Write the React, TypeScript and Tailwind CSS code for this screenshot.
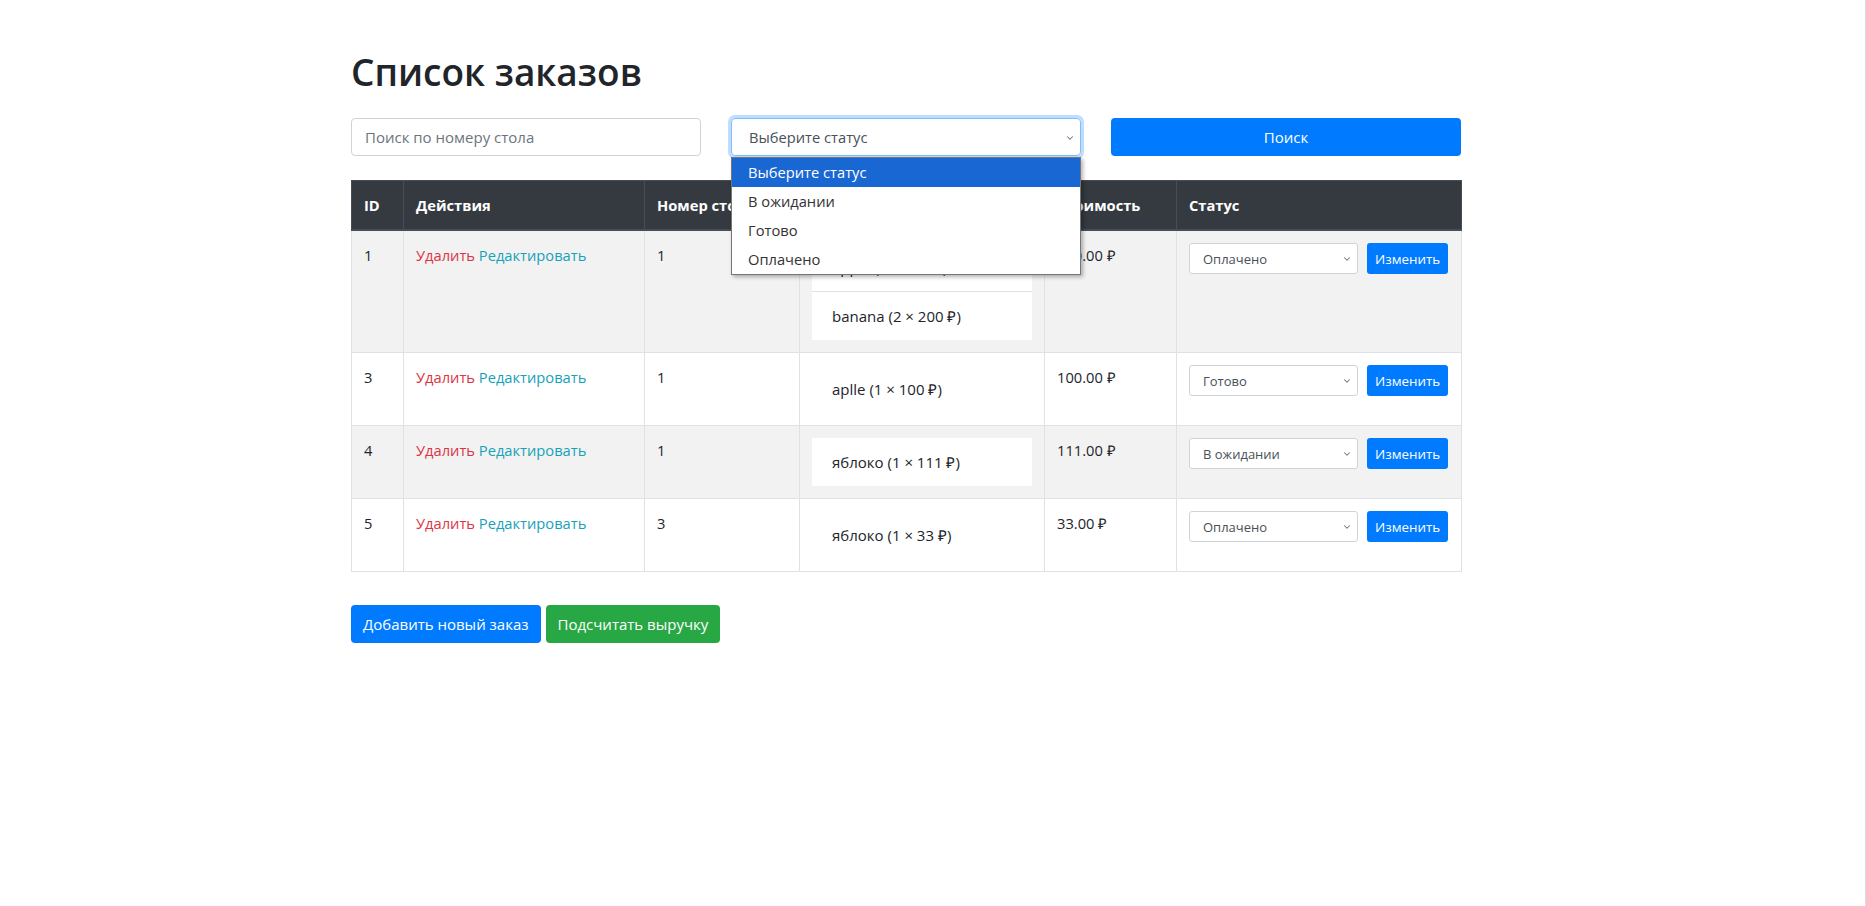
import { ChevronDown } from 'lucide-react'

type Order = {
  id: number
  table: number
  items: string[]
  total: string
  status: string
}

const orders: Order[] = [
  { id: 1, table: 1, items: ['apple (1 × 100 ₽)', 'banana (2 × 200 ₽)'], total: '500.00 ₽', status: 'Оплачено' },
  { id: 3, table: 1, items: ['aplle (1 × 100 ₽)'], total: '100.00 ₽', status: 'Готово' },
  { id: 4, table: 1, items: ['яблоко (1 × 111 ₽)'], total: '111.00 ₽', status: 'В ожидании' },
  { id: 5, table: 3, items: ['яблоко (1 × 33 ₽)'], total: '33.00 ₽', status: 'Оплачено' },
]

const statuses = ['Выберите статус', 'В ожидании', 'Готово', 'Оплачено']

const StatusSelect = ({ value }: { value: string }) => (
  <div className="relative w-[169px]">
    <select
      defaultValue={value}
      className="h-[31px] w-full appearance-none rounded-[3px] border border-[#ced4da] bg-white pl-[13px] text-[13px] text-[#495057]"
    >
      {statuses.slice(1).map((s) => (
        <option key={s}>{s}</option>
      ))}
    </select>
    <ChevronDown className="pointer-events-none absolute right-[6px] top-[11px] h-[10px] w-[10px] text-[#6c757d]" strokeWidth={2.5} />
  </div>
)

export default function App() {
  return (
    <div className="min-h-screen w-full border-r border-[#d3dae3] bg-white text-[14.7px] leading-6 text-[#212529] [font-family:'Open_Sans',sans-serif]">
      <div className="ml-[351px] w-[1110px] pt-[51px]">
        <h1 className="mb-[25px] text-[37px] font-semibold leading-[42px]">Список заказов</h1>

        <div className="grid grid-cols-3 gap-[30px]">
          <input
            type="text"
            placeholder="Поиск по номеру стола"
            className="h-[38px] rounded-[4px] border border-[#ced4da] px-[13px] text-[15px] placeholder:text-[#6c757d]"
          />
          <div className="relative">
            <div className="flex h-[38px] items-center rounded-[4px] border border-[#80bdff] pl-[17px] text-[#495057] shadow-[0_0_0_3px_rgba(0,123,255,0.25)]">
              Выберите статус
            </div>
            <ChevronDown className="pointer-events-none absolute right-[6px] top-[15px] h-[10px] w-[10px] text-[#6c757d]" strokeWidth={2.5} />
            <ul className="absolute left-0 top-[39px] z-10 w-full border border-[#767676] bg-white shadow-[2px_2px_4px_rgba(0,0,0,0.3)]">
              {statuses.map((s, i) => (
                <li
                  key={s}
                  className={
                    i === 0
                      ? 'h-[29px] bg-[#1967d2] pl-4 leading-[29px] text-white'
                      : 'h-[29px] pl-4 leading-[29px] text-[#333]'
                  }
                >
                  {s}
                </li>
              ))}
            </ul>
          </div>
          <button className="h-[38px] rounded-[4px] bg-[#007bff] text-[15px] text-white">Поиск</button>
        </div>

        <table className="mt-[24px] w-full table-fixed border-collapse">
          <thead>
            <tr className="bg-[#343a40] text-white">
              <th className="w-[52px] border border-b-2 border-[#454d55] p-3 text-left font-bold">ID</th>
              <th className="w-[241px] border border-b-2 border-[#454d55] p-3 text-left font-bold">Действия</th>
              <th className="w-[155px] border border-b-2 border-[#454d55] p-3 text-left font-bold">Номер стола</th>
              <th className="w-[245px] border border-b-2 border-[#454d55] p-3 text-left font-bold">Товары</th>
              <th className="w-[132px] border border-b-2 border-[#454d55] p-3 text-left font-bold">Стоимость</th>
              <th className="w-[285px] border border-b-2 border-[#454d55] p-3 text-left font-bold">Статус</th>
            </tr>
          </thead>
          <tbody>
            {orders.map((o, i) => (
              <tr key={o.id} className={i % 2 === 0 ? 'bg-[#f2f2f2]' : 'bg-white'}>
                <td className="border border-[#dee2e6] p-3 align-top">{o.id}</td>
                <td className="border border-[#dee2e6] p-3 align-top">
                  <a className="text-[#dc3545]">Удалить</a> <a className="text-[#17a2b8]">Редактировать</a>
                </td>
                <td className="border border-[#dee2e6] p-3 align-top">{o.table}</td>
                <td className="border border-[#dee2e6] p-3 align-top">
                  <ul>
                    {o.items.map((it, j) => (
                      <li
                        key={it}
                        className={
                          j === 0
                            ? 'bg-white px-5 py-3 text-[15px]'
                            : 'border-t border-[#dee2e6] bg-white px-5 py-3 text-[15px]'
                        }
                      >
                        {it}
                      </li>
                    ))}
                  </ul>
                </td>
                <td className="border border-[#dee2e6] p-3 align-top">{o.total}</td>
                <td className="border border-[#dee2e6] p-3 align-top">
                  <div className="flex items-start gap-[9px]">
                    <StatusSelect value={o.status} />
                    <button className="h-[31px] rounded-[3px] bg-[#007bff] px-2 text-[13.4px] text-white">Изменить</button>
                  </div>
                </td>
              </tr>
            ))}
          </tbody>
        </table>

        <div className="mt-[33px] flex gap-[5px]">
          <button className="h-[38px] rounded-[4px] bg-[#007bff] px-3 text-[15px] text-white">Добавить новый заказ</button>
          <button className="h-[38px] rounded-[4px] bg-[#28a745] px-3 text-[15px] text-white">Подсчитать выручку</button>
        </div>
      </div>
    </div>
  )
}
